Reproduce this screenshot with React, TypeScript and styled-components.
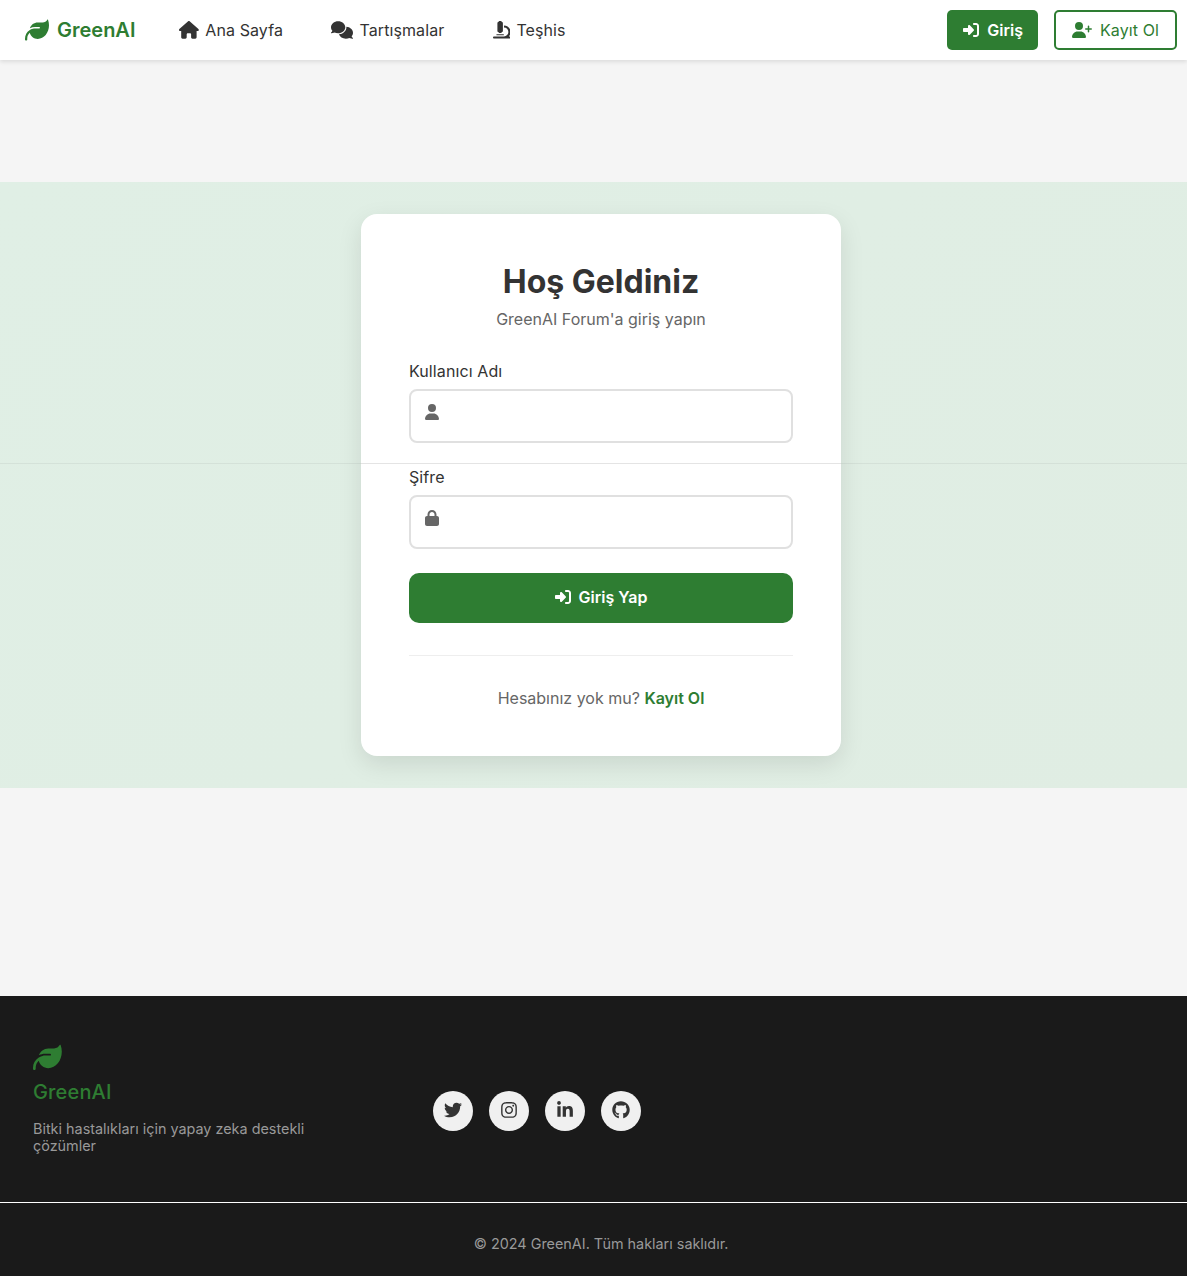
import React from 'react'
import styled, { createGlobalStyle } from 'styled-components'
import {
  FaLeaf,
  FaHouse,
  FaComments,
  FaMicroscope,
  FaRightToBracket,
  FaUserPlus,
  FaUser,
  FaLock,
  FaTwitter,
  FaInstagram,
  FaLinkedinIn,
  FaGithub,
} from 'react-icons/fa6'

const GlobalStyle = createGlobalStyle`
  * {
    box-sizing: border-box;
  }

  body {
    margin: 0;
    background: #f5f5f5;
    color: #333;
    font-family: Inter, "Liberation Sans", sans-serif;
    overflow-x: hidden;
  }
`

function App() {
  return (
    <Page>
      <GlobalStyle />
      <Nav>
        <NavLeft>
          <Brand>
            <FaLeaf size={24} />
            GreenAI
          </Brand>
          <NavLinks>
            <NavLink href="#">
              <FaHouse size={19.8} />
              Ana Sayfa
            </NavLink>
            <NavLink href="#">
              <FaComments size={22} />
              Tartışmalar
            </NavLink>
            <NavLink href="#">
              <FaMicroscope size={17.6} />
              Teşhis
            </NavLink>
          </NavLinks>
        </NavLeft>
        <NavRight>
          <LoginButton href="#">
            <FaRightToBracket size={16} />
            Giriş
          </LoginButton>
          <RegisterButton href="#">
            <FaUserPlus size={20} />
            Kayıt Ol
          </RegisterButton>
        </NavRight>
      </Nav>

      <Main>
        <AuthSection>
          <SectionLine />
          <Card>
            <CardLine />
            <Title>Hoş Geldiniz</Title>
            <Subtitle>GreenAI Forum'a giriş yapın</Subtitle>
            <Field>
              <Label htmlFor="username">Kullanıcı Adı</Label>
              <InputWrap>
                <FieldIcon>
                  <FaUser size={16} />
                </FieldIcon>
                <Input id="username" type="text" />
              </InputWrap>
            </Field>
            <Field>
              <Label htmlFor="password">Şifre</Label>
              <InputWrap>
                <FieldIcon>
                  <FaLock size={16} />
                </FieldIcon>
                <Input id="password" type="password" />
              </InputWrap>
            </Field>
            <SubmitButton type="button">
              <FaRightToBracket size={16} />
              Giriş Yap
            </SubmitButton>
            <CardFooter>
              Hesabınız yok mu? <RegisterLink href="#">Kayıt Ol</RegisterLink>
            </CardFooter>
          </Card>
        </AuthSection>
      </Main>

      <Footer>
        <FooterTop>
          <FooterBrand>
            <FooterLeaf>
              <FaLeaf size={28.8} />
            </FooterLeaf>
            <FooterName>GreenAI</FooterName>
            <FooterText>Bitki hastalıkları için yapay zeka destekli çözümler</FooterText>
          </FooterBrand>
          <Socials>
            <Social href="#">
              <FaTwitter size={18} />
            </Social>
            <Social href="#">
              <FaInstagram size={18} />
            </Social>
            <Social href="#">
              <FaLinkedinIn size={18} />
            </Social>
            <Social href="#">
              <FaGithub size={18} />
            </Social>
          </Socials>
        </FooterTop>
        <Copyright>© 2024 GreenAI. Tüm hakları saklıdır.</Copyright>
      </Footer>
    </Page>
  )
}

const Page = styled.div`
  min-height: 1276px;
  display: flex;
  flex-direction: column;
`

const Nav = styled.nav`
  height: 60px;
  background: #fff;
  box-shadow: 0 2px 4px rgba(0, 0, 0, 0.1);
  display: flex;
  align-items: center;
  justify-content: space-between;
  padding: 0 10px 0 25px;
  position: relative;
  z-index: 2;
`

const NavLeft = styled.div`
  display: flex;
  align-items: center;
`

const Brand = styled.a`
  display: flex;
  align-items: center;
  gap: 8px;
  color: #2e7d32;
  font-size: 20px;
  font-weight: 600;
`

const NavLinks = styled.div`
  display: flex;
  align-items: center;
  gap: 48.4px;
  margin-left: 44px;
`

const NavLink = styled.a`
  display: flex;
  align-items: center;
  gap: 6px;
  color: #333;
  font-size: 16px;
  letter-spacing: 0.1px;
  text-decoration: none;
`

const NavRight = styled.div`
  display: flex;
  align-items: center;
  gap: 16px;
`

const LoginButton = styled.a`
  height: 40px;
  padding: 0 15px 0 16px;
  display: flex;
  align-items: center;
  gap: 8px;
  background: #2e7d32;
  color: #fff;
  border-radius: 5px;
  font-size: 16px;
  font-weight: 600;
  text-decoration: none;
`

const RegisterButton = styled.a`
  height: 40px;
  padding: 0 16px;
  display: flex;
  align-items: center;
  gap: 8px;
  background: #fff;
  border: 2px solid #2e7d32;
  color: #2e7d32;
  border-radius: 5px;
  font-size: 16px;
  letter-spacing: 0.1px;
  text-decoration: none;
`

const Main = styled.main`
  height: 936px;
  padding-top: 122px;
`

const AuthSection = styled.section`
  position: relative;
  height: 606px;
  padding: 32px 0 32px 15px;
  display: flex;
  justify-content: center;
  background: linear-gradient(135deg, #e0efe5, #e0ede3);
`

const SectionLine = styled.div`
  position: absolute;
  top: 281px;
  left: 0;
  right: 0;
  height: 1px;
  background: rgba(0, 0, 0, 0.05);
`

const Card = styled.div`
  position: relative;
  width: 480px;
  height: 542px;
  padding: 48px;
  background: #fff;
  border-radius: 16px;
  box-shadow: 0 8px 24px rgba(0, 0, 0, 0.1);
`

const CardLine = styled.div`
  position: absolute;
  top: 249px;
  left: 0;
  right: 0;
  height: 1px;
  background: #e4e4e4;
`

const Title = styled.h1`
  margin: 0;
  text-align: center;
  font-size: 32px;
  line-height: 39px;
  font-weight: 700;
  color: #333;
`

const Subtitle = styled.p`
  margin: 8px 0 31px;
  text-align: center;
  font-size: 16px;
  line-height: 21px;
  color: #666;
`

const Field = styled.div`
  margin-bottom: 24px;
`

const Label = styled.label`
  display: block;
  margin-bottom: 8px;
  font-size: 16px;
  line-height: 20px;
  letter-spacing: 0.1px;
  color: #333;
`

const InputWrap = styled.div`
  position: relative;
`

const FieldIcon = styled.span`
  position: absolute;
  left: 15px;
  top: 15px;
  color: #666;
  line-height: 16px;
`

const Input = styled.input`
  display: block;
  width: 100%;
  height: 54px;
  padding: 0 16px 0 48px;
  background: #fff;
  border: 2px solid #e0e0e0;
  border-radius: 8px;
  font-size: 16px;
`

const SubmitButton = styled.button`
  width: 100%;
  height: 50px;
  padding: 0 0 2px;
  display: flex;
  align-items: center;
  justify-content: center;
  gap: 8px;
  background: #2e7d32;
  color: #fff;
  border: none;
  border-radius: 10px;
  font-family: inherit;
  font-size: 16px;
  font-weight: 600;
`

const CardFooter = styled.p`
  margin: 32px 0 0;
  padding-top: 32px;
  border-top: 1px solid #eee;
  text-align: center;
  font-size: 16px;
  line-height: 20px;
  color: #666;
`

const RegisterLink = styled.a`
  color: #2e7d32;
  font-weight: 600;
  text-decoration: none;
`

const Footer = styled.footer`
  height: 280px;
  background: #1a1a1a;
  display: flex;
  flex-direction: column;
`

const FooterTop = styled.div`
  height: 207px;
  padding: 47px 33px 0;
  display: flex;
  align-items: flex-start;
  border-bottom: 1px solid #fff;
`

const FooterBrand = styled.div`
  width: 400px;
  padding-right: 120px;
`

const FooterLeaf = styled.div`
  color: #2e7d32;
  line-height: 28.8px;
  height: 29px;
`

const FooterName = styled.div`
  margin-top: 8px;
  color: #2e7d32;
  font-size: 20px;
  line-height: 24px;
  font-weight: 500;
  letter-spacing: 0.15px;
`

const FooterText = styled.p`
  margin: 16px 0 0;
  color: #999;
  font-size: 14.4px;
  line-height: 17px;
`

const Socials = styled.div`
  display: flex;
  gap: 16px;
  margin-top: 48px;
`

const Social = styled.a`
  width: 40px;
  height: 40px;
  padding-bottom: 2px;
  border-radius: 50%;
  background: #f0f0f0;
  color: #333;
  display: flex;
  align-items: center;
  justify-content: center;
`

const Copyright = styled.div`
  flex: 1;
  padding: 8px 0 0 15px;
  display: flex;
  align-items: center;
  justify-content: center;
  color: #999;
  font-size: 14.4px;
`

export default App
